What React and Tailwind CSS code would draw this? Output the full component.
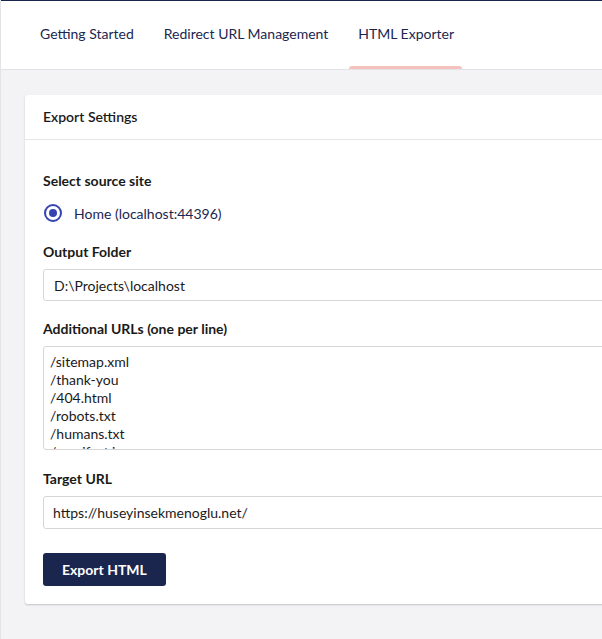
export default function App() {
  const font = { fontFamily: "Lato, 'Noto Sans', sans-serif" };
  return (
    <div className="w-[602px] h-[639px] overflow-hidden bg-[#f3f3f5] border-l border-[#e3e3e6] flex flex-col" style={font}>
      <div className="h-px bg-[#1b264f] shrink-0" />
      <div className="h-[69px] bg-white border-b border-[#e3e3e6] flex items-end pl-[30px] gap-[13px] shrink-0">
        {["Getting Started", "Redirect URL Management", "HTML Exporter"].map((t, i) => (
          <div key={t} className="flex flex-col items-stretch">
            <div className="h-[65px] flex items-center pl-[9px] pr-[8px] pb-[1px] text-[14px] text-[#1b264f] whitespace-nowrap">{t}</div>
            <div className={i === 2 ? "h-[3px] rounded-t-[3px] bg-[#f5c1bd]" : "h-[3px]"} />
          </div>
        ))}
      </div>
      <div className="pl-[24px] pt-[25px]">
        <div className="w-[700px] bg-white rounded-[3px] shadow-[0_1px_2px_rgba(0,0,0,0.2)]">
          <div className="h-[45px] flex items-center px-[18px] pb-[1px] border-b border-[#e6e6e6] text-[14px] font-semibold text-[#1a1a1a]">
            Export Settings
          </div>
          <div className="px-[18px] pt-[31px] pb-[18px] text-[#1a1a1a]">
            <div className="text-[14px] font-bold leading-[20px]">Select source site</div>
            <div className="flex items-center mt-[12px] h-[20px]">
              <div className="w-[18px] h-[18px] rounded-full border-2 border-[#3544b1] flex items-center justify-center ml-px">
                <div className="w-[8px] h-[8px] rounded-full bg-[#3544b1]" />
              </div>
              <span className="ml-[12px] text-[14px] text-[#1b264f]">Home (localhost:44396)</span>
            </div>
            <div className="text-[14px] font-bold leading-[20px] mt-[19px]">Output Folder</div>
            <div className="mt-[7px] h-[32px] border border-[#d6d6d6] rounded-[3px] flex items-center px-[10px] text-[14px] text-[#1a1a1a]">
              D:\Projects\localhost
            </div>
            <div className="text-[14px] font-bold leading-[20px] mt-[18px]">Additional URLs (one per line)</div>
            <div className="mt-[7px] h-[104px] border border-[#d6d6d6] rounded-[3px] overflow-hidden px-[6px] pt-[6px] text-[14px] leading-[18px] text-[#1a1a1a]">
              <div>/sitemap.xml</div>
              <div>/thank-you</div>
              <div>/404.html</div>
              <div>/robots.txt</div>
              <div>/humans.txt</div>
              <div>/manifest.json</div>
            </div>
            <div className="text-[14px] font-bold leading-[20px] mt-[19px]">Target URL</div>
            <div className="mt-[7px] h-[33px] border border-[#d6d6d6] rounded-[3px] flex items-center px-[9px] text-[14px] text-[#1a1a1a]">
              https://huseyinsekmenoglu.net/
            </div>
            <button className="mt-[24px] h-[33px] px-[19px] bg-[#1b264f] text-white text-[14px] font-bold rounded-[3px]">
              Export HTML
            </button>
          </div>
        </div>
      </div>
    </div>
  );
}
